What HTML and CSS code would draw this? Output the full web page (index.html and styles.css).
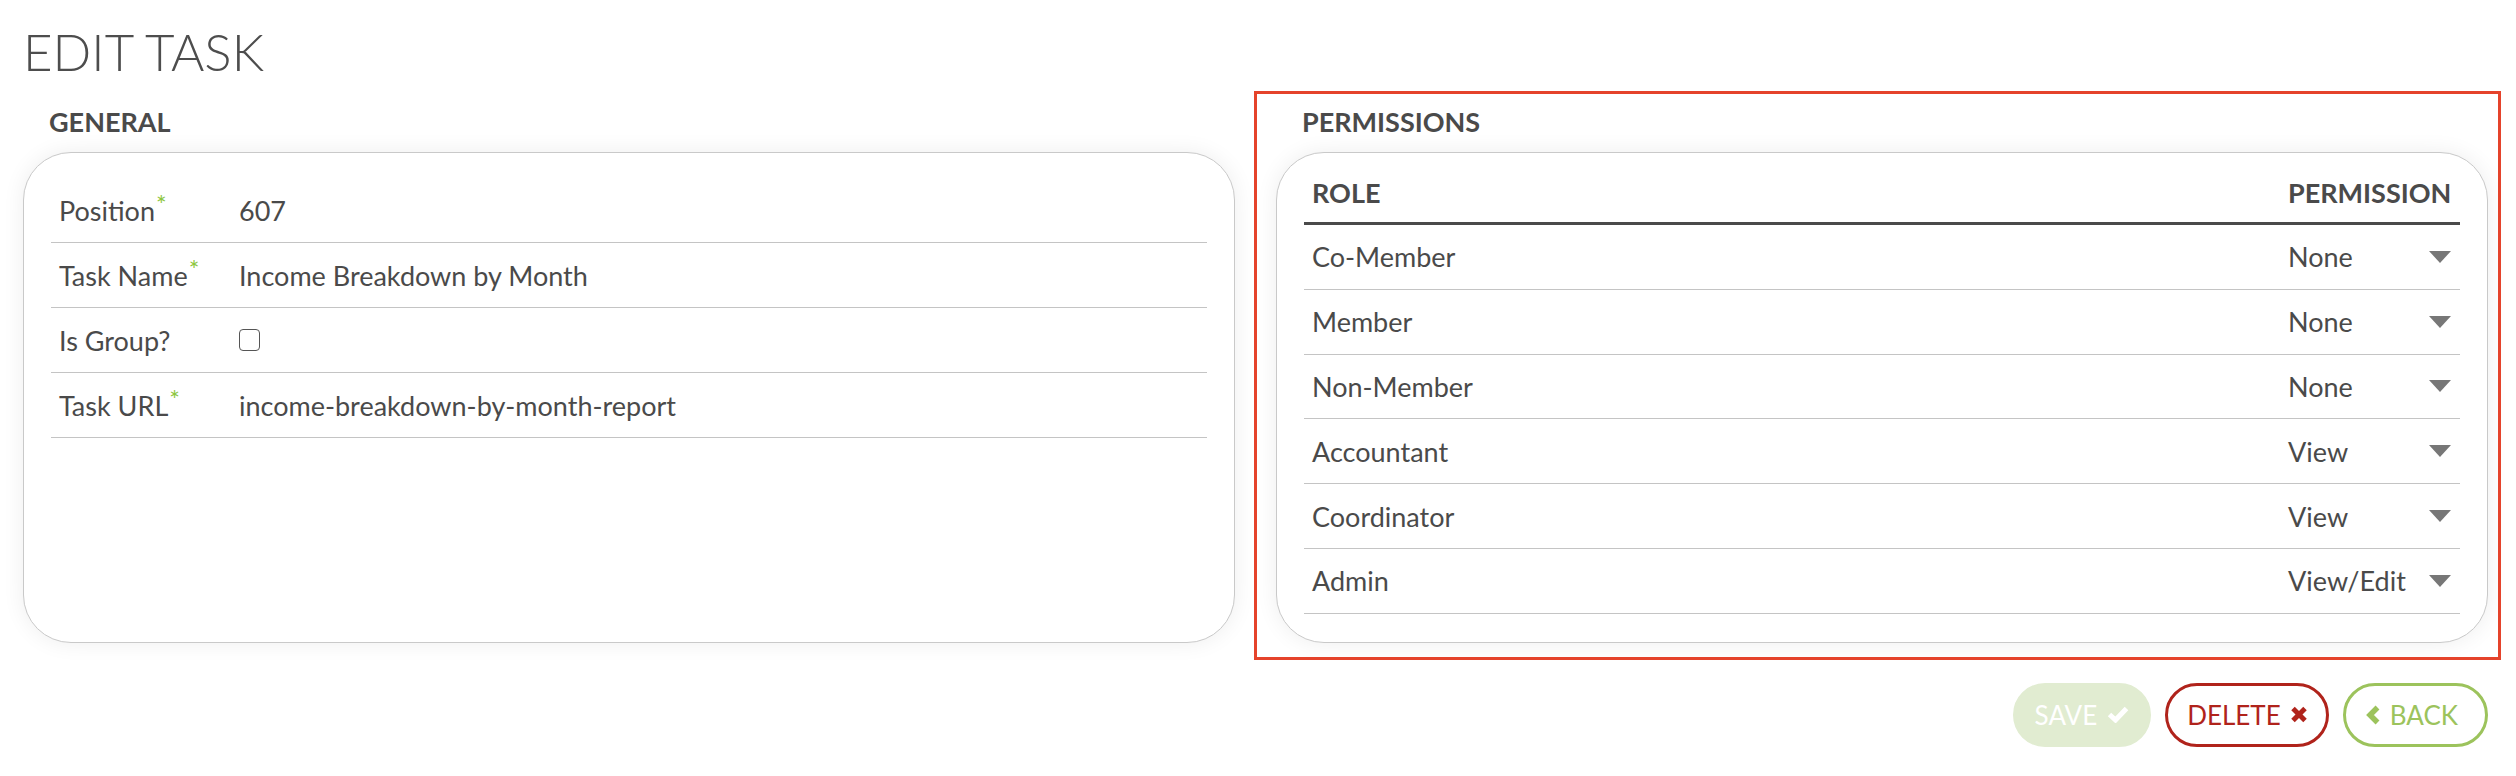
FILE: index.html
```html
<!DOCTYPE html>
<html lang="en">
<head>
<meta charset="utf-8">
<title>Edit Task</title>
<link rel="stylesheet" href="styles.css">
</head>
<body>
<div class="page">
  <h1 class="title">EDIT TASK</h1>
  <div class="columns">
    <section class="col">
      <h2 class="section-title">GENERAL</h2>
      <div class="card card-general">
        <div class="field-row">
          <div class="field-label">Position<span class="req">*</span></div>
          <div class="field-value">607</div>
        </div>
        <div class="field-row">
          <div class="field-label">Task Name<span class="req">*</span></div>
          <div class="field-value">Income Breakdown by Month</div>
        </div>
        <div class="field-row">
          <div class="field-label">Is Group?</div>
          <div class="field-value"><input type="checkbox" class="checkbox"></div>
        </div>
        <div class="field-row">
          <div class="field-label">Task URL<span class="req">*</span></div>
          <div class="field-value">income-breakdown-by-month-report</div>
        </div>
      </div>
    </section>
    <section class="col col-highlight">
      <h2 class="section-title">PERMISSIONS</h2>
      <div class="card card-perm">
        <div class="perm-head">
          <div class="perm-role">ROLE</div>
          <div class="perm-val">PERMISSION</div>
        </div>
        <div class="perm-row">
          <div class="perm-role">Co-Member</div>
          <div class="perm-val select"><span>None</span><svg class="caret" viewBox="0 0 22 12"><polygon points="0,0 22,0 11,12"/></svg></div>
        </div>
        <div class="perm-row">
          <div class="perm-role">Member</div>
          <div class="perm-val select"><span>None</span><svg class="caret" viewBox="0 0 22 12"><polygon points="0,0 22,0 11,12"/></svg></div>
        </div>
        <div class="perm-row">
          <div class="perm-role">Non-Member</div>
          <div class="perm-val select"><span>None</span><svg class="caret" viewBox="0 0 22 12"><polygon points="0,0 22,0 11,12"/></svg></div>
        </div>
        <div class="perm-row">
          <div class="perm-role">Accountant</div>
          <div class="perm-val select"><span>View</span><svg class="caret" viewBox="0 0 22 12"><polygon points="0,0 22,0 11,12"/></svg></div>
        </div>
        <div class="perm-row">
          <div class="perm-role">Coordinator</div>
          <div class="perm-val select"><span>View</span><svg class="caret" viewBox="0 0 22 12"><polygon points="0,0 22,0 11,12"/></svg></div>
        </div>
        <div class="perm-row">
          <div class="perm-role">Admin</div>
          <div class="perm-val select"><span>View/Edit</span><svg class="caret" viewBox="0 0 22 12"><polygon points="0,0 22,0 11,12"/></svg></div>
        </div>
      </div>
    </section>
  </div>
  <div class="actions">
    <button class="btn btn-save" type="button">SAVE <svg class="icon icon-check" viewBox="0 0 22 17"><polyline points="2.5,8.5 8.5,14 19.5,2.5"/></svg></button>
    <button class="btn btn-delete" type="button">DELETE <svg class="icon icon-x" viewBox="0 0 16 17"><line x1="2" y1="2.5" x2="14" y2="14.5"/><line x1="14" y1="2.5" x2="2" y2="14.5"/></svg></button>
    <button class="btn btn-back" type="button"><svg class="icon icon-chev" viewBox="0 0 15 20"><polyline points="12.5,2.5 5,10 12.5,17.5"/></svg> BACK</button>
  </div>
</div>
</body>
</html>
```

FILE: styles.css
```css
* { box-sizing: border-box; }

html, body {
  margin: 0;
  padding: 0;
  background: #ffffff;
}

body {
  font-family: Lato, "Open Sans", "Liberation Sans", sans-serif;
  color: #4a4a4a;
}

.page {
  padding: 21px 28px 0 23px;
}

.title {
  margin: 0 0 23px 0;
  font-size: 51px;
  line-height: 62px;
  font-weight: 300;
  color: #4d4d4d;
  letter-spacing: 0;
}

.columns {
  display: grid;
  grid-template-columns: 1fr 1fr;
  column-gap: 41px;
}

.col {
  display: flex;
  flex-direction: column;
  position: relative;
}

.col-highlight::after {
  content: "";
  position: absolute;
  top: -15px;
  left: -22px;
  right: -13px;
  bottom: -17px;
  border: 3px solid #e5432b;
  pointer-events: none;
}

.section-title {
  margin: 0 0 14px 0;
  padding-left: 26px;
  font-size: 27px;
  line-height: 32px;
  font-weight: 700;
  color: #4a4a4a;
}

.card {
  flex: 1;
  background: #fff;
  border: 1px solid #c9c9c9;
  border-radius: 48px;
  box-shadow: 0 0 22px rgba(0, 0, 0, 0.07);
}

.card-general {
  padding: 25px 27px;
}

.field-row {
  display: flex;
  align-items: center;
  height: 65px;
  border-bottom: 1px solid #c4c4c4;
  font-size: 27px;
}

.field-label {
  width: 180px;
  padding: 0 8px;
  white-space: nowrap;
}

.field-value {
  flex: 1;
  padding: 0 8px;
  display: flex;
  align-items: center;
}

.req {
  color: #8cc63e;
  font-size: 25px;
  font-weight: 400;
  line-height: 0;
  vertical-align: 7px;
  margin-left: 1px;
}

.checkbox {
  appearance: none;
  -webkit-appearance: none;
  margin: 0;
  width: 21px;
  height: 22px;
  border: 1px solid #555;
  border-radius: 4px;
  background: #fff;
}

.card-perm {
  padding: 24px 27px 28px 27px;
}

.perm-head {
  display: flex;
  align-items: flex-start;
  height: 48px;
  border-bottom: 3px solid #4a4a4a;
  font-size: 27px;
  line-height: 32px;
  font-weight: 700;
}

.perm-row {
  display: flex;
  align-items: center;
  height: 64.8px;
  border-bottom: 1px solid #c4c4c4;
  font-size: 27px;
}

.perm-role {
  flex: 1;
  padding: 0 8px;
}

.perm-val {
  width: 180px;
  padding: 0 8px;
}

.select {
  display: flex;
  align-items: center;
  justify-content: space-between;
  padding: 0 9px 0 8px;
}

.caret {
  width: 22px;
  height: 12px;
  fill: #777;
}

.actions {
  display: flex;
  justify-content: flex-end;
  gap: 14px;
  margin-top: 40px;
}

.btn {
  display: flex;
  align-items: center;
  gap: 10px;
  height: 64px;
  padding: 0 19px;
  border-radius: 32px;
  font-family: Lato, "Open Sans", "Liberation Sans", sans-serif;
  font-size: 26px;
  font-weight: 400;
  background: #fff;
  cursor: pointer;
}

.btn-save {
  background: #e1ecd1;
  border: 3px solid #e1ecd1;
  color: #ffffff;
}

.btn-delete {
  border: 3px solid #b0231b;
  color: #b0231b;
}

.btn-back {
  border: 3px solid #9cc35c;
  color: #9cc35c;
  padding-right: 27px;
}

.icon {
  fill: none;
  stroke: currentColor;
}

.icon-check {
  width: 22px;
  height: 17px;
  stroke-width: 5;
}

.icon-x {
  width: 16px;
  height: 17px;
  stroke-width: 5;
}

.icon-chev {
  width: 15px;
  height: 20px;
  stroke-width: 5.5;
}
```
